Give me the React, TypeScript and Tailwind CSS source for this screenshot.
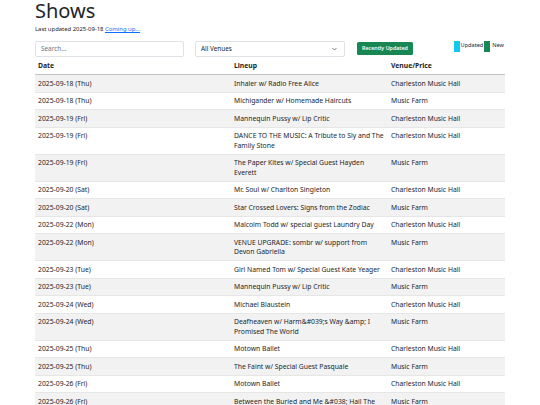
import React from "react";

const rows: [string, string, string][] = [
  ["2025-09-18 (Thu)", "Inhaler w/ Radio Free Alice", "Charleston Music Hall"],
  ["2025-09-18 (Thu)", "Michigander w/ Homemade Haircuts", "Music Farm"],
  ["2025-09-19 (Fri)", "Mannequin Pussy w/ Lip Critic", "Charleston Music Hall"],
  ["2025-09-19 (Fri)", "DANCE TO THE MUSIC: A Tribute to Sly and The Family Stone", "Charleston Music Hall"],
  ["2025-09-19 (Fri)", "The Paper Kites w/ Special Guest Hayden Everett", "Music Farm"],
  ["2025-09-20 (Sat)", "Mr. Soul w/ Charlton Singleton", "Charleston Music Hall"],
  ["2025-09-20 (Sat)", "Star Crossed Lovers: Signs from the Zodiac", "Music Farm"],
  ["2025-09-22 (Mon)", "Malcolm Todd w/ special guest Laundry Day", "Charleston Music Hall"],
  ["2025-09-22 (Mon)", "VENUE UPGRADE: sombr w/ support from Devon Gabriella", "Music Farm"],
  ["2025-09-23 (Tue)", "Girl Named Tom w/ Special Guest Kate Yeager", "Charleston Music Hall"],
  ["2025-09-23 (Tue)", "Mannequin Pussy w/ Lip Critic", "Music Farm"],
  ["2025-09-24 (Wed)", "Michael Blaustein", "Charleston Music Hall"],
  ["2025-09-24 (Wed)", "Deafheaven w/ Harm&#039;s Way &amp; I Promised The World", "Music Farm"],
  ["2025-09-25 (Thu)", "Motown Ballet", "Charleston Music Hall"],
  ["2025-09-25 (Thu)", "The Faint w/ Special Guest Pasquale", "Music Farm"],
  ["2025-09-26 (Fri)", "Motown Ballet", "Charleston Music Hall"],
  ["2025-09-26 (Fri)", "Between the Buried and Me &#038; Hail The Sun", "Music Farm"],
];

export default function App() {
  return (
    <div
      className="w-[540px] h-[405px] overflow-hidden bg-white text-[#212529]"
      style={{ fontFamily: '"Noto Sans", "Open Sans", sans-serif' }}
    >
      <div className="mx-[35px] w-[470px]">
        <h1 className="text-[20px] leading-[21px] font-normal">Shows</h1>
        <p className="mt-[4px] text-[5.9px] leading-[9px]">
          Last updated 2025-09-18{" "}
          <a className="text-[#0d6efd] underline">Coming up...</a>
        </p>
        <div className="mt-[7px] flex items-start">
          <div className="w-[149px] h-[15.5px] border border-[#dee2e6] rounded-[2px] flex items-center px-[5px] text-[6.4px] text-[#6c757d]">
            Search...
          </div>
          <div className="ml-[11px] w-[150px] h-[15.5px] border border-[#dee2e6] rounded-[2px] flex items-center justify-between pl-[5px] pr-[7px] text-[6.4px]">
            <span>All Venues</span>
            <svg width="5" height="4" viewBox="0 0 10 6" fill="none" stroke="#343a40" strokeWidth="1.3">
              <path d="M1 1l4 4 4-4" />
            </svg>
          </div>
          <div className="ml-[12px] mt-[1px] w-[56px] h-[13px] bg-[#198754] rounded-[1.5px] text-white text-[5.3px] font-semibold flex items-center justify-center">
            Recently Updated
          </div>
          <div className="ml-auto flex items-start text-[5.6px] leading-[9px]">
            <span className="w-[6px] h-[11px] bg-[#0dcaf0] inline-block" />
            <span className="ml-[0.5px]">Updated</span>
            <span className="ml-[1px] w-[6px] h-[11px] bg-[#198754] inline-block" />
            <span className="ml-[2px] mr-[1px]">New</span>
          </div>
        </div>
        <table className="mt-[1px] w-[470px] table-fixed border-collapse text-[6.8px] leading-[9.5px]">
          <colgroup>
            <col className="w-[196px]" />
            <col className="w-[157px]" />
            <col className="w-[117px]" />
          </colgroup>
          <thead>
            <tr className="border-b-[1.5px] border-[#c4c4c4]">
              <th className="text-left font-bold px-[3px] py-[3.5px]">Date</th>
              <th className="text-left font-bold px-[3px] py-[3.5px]">Lineup</th>
              <th className="text-left font-bold px-[3px] py-[3.5px]">Venue/Price</th>
            </tr>
          </thead>
          <tbody>
            {rows.map((r, i) => (
              <tr
                key={i}
                className={
                  (i % 2 === 0 ? "bg-[#f2f2f2] " : "bg-white ") +
                  "border-b border-[#e6e6e6] align-top"
                }
              >
                <td className="px-[3px] py-[3.5px]">{r[0]}</td>
                <td className="px-[3px] py-[3.5px]">{r[1]}</td>
                <td className="px-[3px] py-[3.5px]">{r[2]}</td>
              </tr>
            ))}
          </tbody>
        </table>
      </div>
    </div>
  );
}
